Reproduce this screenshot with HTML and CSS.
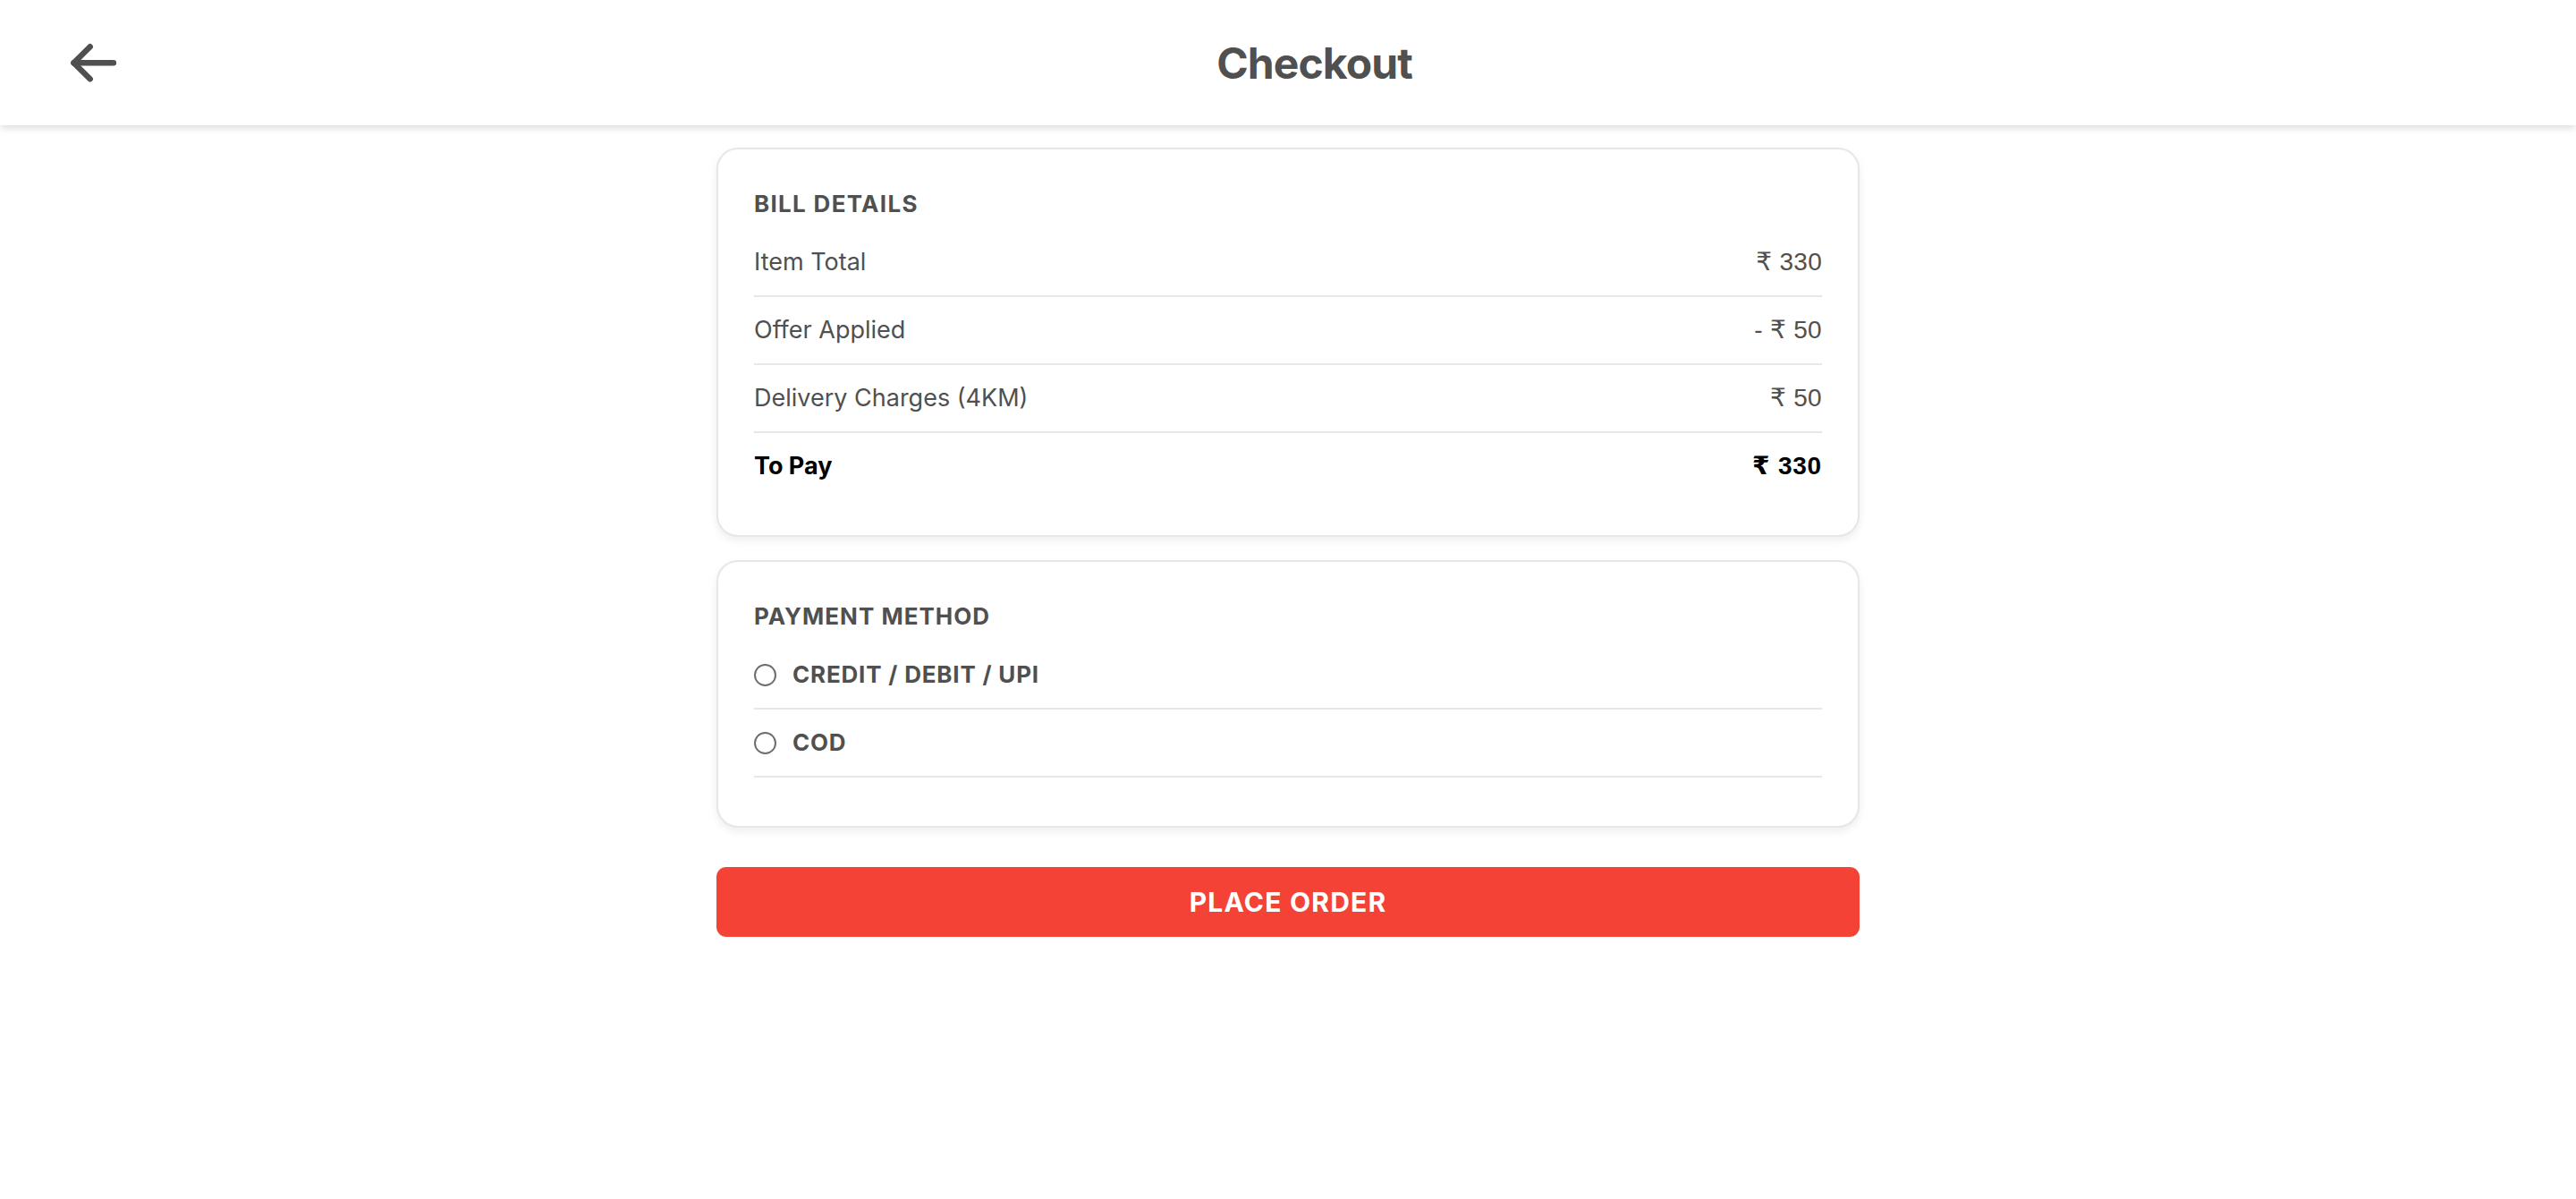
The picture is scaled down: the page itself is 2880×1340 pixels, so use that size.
FILE: index.html
```html
<!DOCTYPE html>
<html lang="en">
<head>
<meta charset="utf-8">
<title>Checkout</title>
<link rel="stylesheet" href="styles.css">
</head>
<body>
<header class="topbar">
  <button class="back" aria-label="Back">
    <svg width="52" height="46" viewBox="0 0 52 46" fill="none" stroke="#505050" stroke-width="6.5" stroke-linecap="round" stroke-linejoin="round">
      <path d="M49 23.3H4.5"/>
      <path d="M22.7 5.3L4.5 23.3L22.7 41.3"/>
    </svg>
  </button>
  <h1 class="title">Checkout</h1>
</header>
<main class="page">
  <section class="card">
    <h2 class="card-title">BILL DETAILS</h2>
    <div class="rows">
      <div class="row"><span>Item Total</span><span class="amt">₹ 330</span></div>
      <div class="row"><span>Offer Applied</span><span class="amt">- ₹ 50</span></div>
      <div class="row"><span>Delivery Charges (4KM)</span><span class="amt">₹ 50</span></div>
      <div class="row total"><span>To Pay</span><span class="amt">₹ 330</span></div>
    </div>
  </section>
  <section class="card pay">
    <h2 class="card-title">PAYMENT METHOD</h2>
    <div class="options">
      <label class="option"><span class="radio"></span><span>CREDIT / DEBIT / UPI</span></label>
      <label class="option"><span class="radio"></span><span>COD</span></label>
    </div>
  </section>
  <button class="place">PLACE ORDER</button>
</main>
</body>
</html>
```

FILE: styles.css
```css
* { box-sizing: border-box; }
html, body { margin: 0; padding: 0; background: #fff; }
body { font-family: Inter, "Noto Sans", "Liberation Sans", sans-serif; color: #505050; }

.topbar {
  height: 140px;
  display: flex;
  align-items: center;
  padding: 0 71px 0 78px;
  background: #fff;
  box-shadow: 0 3px 8px rgba(0,0,0,0.14);
  position: relative;
}
.back {
  border: 0;
  background: none;
  padding: 0;
  width: 52px;
  height: 46px;
  display: flex;
  cursor: pointer;
}
.title {
  flex: 1;
  margin: 0;
  text-align: center;
  font-size: 48px;
  font-weight: 700;
  color: #505050;
  letter-spacing: -0.9px;
}

.page {
  width: 1278px;
  margin: 25px auto 0;
  display: flex;
  flex-direction: column;
}
.card {
  background: #fff;
  border: 2px solid #e4e7eb;
  border-radius: 24px;
  padding: 43px 40px 40px;
  box-shadow: 0 4px 10px rgba(0,0,0,0.07);
}
.card + .card { margin-top: 26px; }
.card-title {
  margin: 0 0 10px;
  font-size: 26px;
  line-height: 36px;
  font-weight: 700;
  letter-spacing: 1.3px;
  color: #505050;
}
.pay .card-title { letter-spacing: 1px; }
.row {
  display: flex;
  justify-content: space-between;
  align-items: center;
  padding: 19px 0;
  line-height: 36px;
  font-size: 27px;
  border-bottom: 2px solid #e4e7eb;
}
.row:last-child { border-bottom: 0; }
.amt { font-family: "Liberation Sans", Arial, "DejaVu Sans", sans-serif; font-size: 28px; letter-spacing: 0.3px; }
.total { color: #000; font-weight: 700; }
.total .amt { letter-spacing: 0.8px; }

.options { margin-bottom: 14px; }
.option {
  display: flex;
  align-items: center;
  gap: 18px;
  padding: 19px 0;
  line-height: 36px;
  font-size: 26px;
  font-weight: 700;
  letter-spacing: 0.8px;
  color: #505050;
  border-bottom: 2px solid #e4e7eb;
}
.radio {
  width: 25px;
  height: 25px;
  border-radius: 50%;
  border: 2px solid #6e6e6e;
  background: #fff;
  flex: none;
}

.place {
  margin-top: 44px;
  height: 78px;
  border: 0;
  border-radius: 11px;
  background: #f44336;
  color: #fff;
  font-family: Inter, "Noto Sans", sans-serif;
  font-size: 30px;
  font-weight: 700;
  letter-spacing: 1.2px;
  cursor: pointer;
}
```
